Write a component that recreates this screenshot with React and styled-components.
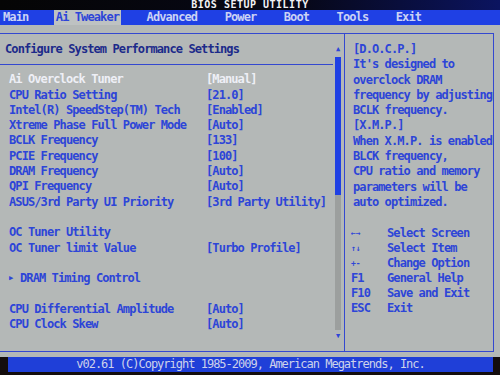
import React from "react";
import styled, { createGlobalStyle } from "styled-components";

const GlobalStyle = createGlobalStyle`
  html, body {
    margin: 0;
    padding: 0;
    background: #140d0d;
  }
`;

const Screen = styled.div`
  width: 500px;
  height: 375px;
  overflow: hidden;
  display: flex;
  flex-direction: column;
  background: #140d0d;
  font-family: "DejaVu Sans Mono", "Liberation Mono", monospace;
  font-size: 12px;
  font-weight: bold;
  letter-spacing: -0.9px;
`;

const TitleBar = styled.div`
  height: 10px;
  line-height: 10px;
  overflow: hidden;
  background: linear-gradient(to right, #050505 0%, #070818 60%, #0b1460 100%);
  color: #f2f2f6;
  text-align: center;
  font-size: 10px;
  letter-spacing: 0.5px;
`;

const MenuBar = styled.div`
  height: 15px;
  display: flex;
  gap: 23.5px;
  padding-left: 1px;
  background: #1f40e4;
`;

const MenuItem = styled.div`
  padding: 0 2px;
  line-height: 15px;
  color: ${(p) => (p.$active ? "#2d45d8" : "#cbd2f4")};
  background: ${(p) => (p.$active ? "#bec2c2" : "transparent")};
`;

const Body = styled.div`
  height: 332px;
  box-sizing: border-box;
  padding: 8px 6px 5px 0;
  background: #b4b8b7;
`;

const Frame = styled.div`
  height: 100%;
  box-sizing: border-box;
  display: grid;
  grid-template-columns: 345px 1fr;
  border: 1px solid #3448d0;
  border-left: none;
`;

const LeftPanel = styled.div`
  display: grid;
  grid-template-columns: 1fr 11px;
  border-right: 1px solid #3448d0;
  min-height: 0;
`;

const Content = styled.div`
  display: flex;
  flex-direction: column;
`;

const Heading = styled.div`
  height: 30px;
  line-height: 30px;
  padding-left: 5px;
  color: #1c2a8a;
  border-bottom: 1px solid #3448d0;
`;

const List = styled.div`
  padding-top: 7.3px;
`;

const Row = styled.div`
  display: grid;
  grid-template-columns: 197px 1fr;
  height: 15.31px;
  line-height: 15.31px;
  padding-left: 9px;
  white-space: pre;
  color: ${(p) => (p.$active ? "#eeeff6" : "#2d45d8")};
`;

const Pointer = styled.span`
  display: inline-block;
  width: 11px;
  font-size: 7px;
  vertical-align: top;
`;

const ScrollColumn = styled.div`
  display: flex;
  flex-direction: column;
  align-items: flex-start;
  padding: 11px 0 11px 2px;
`;

const Arrow = styled.div`
  width: 6px;
  height: 8px;
  line-height: 8px;
  font-size: 7px;
  text-align: center;
  letter-spacing: 0;
  color: #2d45d8;
`;

const Thumb = styled.div`
  width: 6px;
  height: 138px;
  margin-top: 4px;
  background: #1f40e4;
`;

const Track = styled.div`
  width: 6px;
  flex: 1;
  margin-bottom: 2px;
  background: #9c9f9e;
`;

const RightPanel = styled.div`
  padding: 8px 0 0 8px;
  overflow: hidden;
  color: #2d45d8;
`;

const Line = styled.div`
  height: 15.3px;
  line-height: 15.3px;
  white-space: pre;
`;

const KeyRow = styled.div`
  display: grid;
  grid-template-columns: 36px 1fr;
  height: 15.1px;
  line-height: 15.1px;
  margin-left: -2px;
  white-space: pre;
`;

const Key = styled.span`
  font-size: ${(p) => (p.$small ? "8px" : "12px")};
  letter-spacing: ${(p) => (p.$small ? "0" : "-0.9px")};
`;

const Footer = styled.div`
  height: 15px;
  line-height: 15px;
  margin: 0 7px 0 8px;
  background: #1f3fd8;
  color: #cdd2ea;
  text-align: center;
  font-weight: normal;
  letter-spacing: -1px;
`;

const menu = ["Main", "Ai Tweaker", "Advanced", "Power", "Boot", "Tools", "Exit"];

const rows = [
  { label: "Ai Overclock Tuner", value: "[Manual]", active: true },
  { label: "CPU Ratio Setting", value: "[21.0]" },
  { label: "Intel(R) SpeedStep(TM) Tech", value: "[Enabled]" },
  { label: "Xtreme Phase Full Power Mode", value: "[Auto]" },
  { label: "BCLK Frequency", value: "[133]" },
  { label: "PCIE Frequency", value: "[100]" },
  { label: "DRAM Frequency", value: "[Auto]" },
  { label: "QPI Frequency", value: "[Auto]" },
  { label: "ASUS/3rd Party UI Priority", value: "[3rd Party Utility]" },
  {},
  { label: "OC Tuner Utility" },
  { label: "OC Tuner limit Value", value: "[Turbo Profile]" },
  {},
  { label: "DRAM Timing Control", sub: true },
  {},
  { label: "CPU Differential Amplitude", value: "[Auto]" },
  { label: "CPU Clock Skew", value: "[Auto]" },
];

const help = [
  "[D.O.C.P.]",
  "It's designed to",
  "overclock DRAM",
  "frequency by adjusting",
  "BCLK frequency.",
  "[X.M.P.]",
  "When X.M.P. is enabled",
  "BLCK frequency,",
  "CPU ratio and memory",
  "parameters will be",
  "auto optimized.",
  "",
];

const keys = [
  { key: "←→", small: true, text: "Select Screen" },
  { key: "↑↓", small: true, text: "Select Item" },
  { key: "+-", small: true, text: "Change Option" },
  { key: "F1", text: "General Help" },
  { key: "F10", text: "Save and Exit" },
  { key: "ESC", text: "Exit" },
];

export default function App() {
  return (
    <Screen>
      <GlobalStyle />
      <TitleBar>BIOS SETUP UTILITY</TitleBar>
      <MenuBar>
        {menu.map((m) => (
          <MenuItem key={m} $active={m === "Ai Tweaker"}>
            {m}
          </MenuItem>
        ))}
      </MenuBar>
      <Body>
        <Frame>
          <LeftPanel>
            <Content>
              <Heading>Configure System Performance Settings</Heading>
              <List>
                {rows.map((r, i) => (
                  <Row key={i} $active={r.active}>
                    <span>
                      {r.sub && <Pointer>▶</Pointer>}
                      {r.label || ""}
                    </span>
                    <span>{r.value || ""}</span>
                  </Row>
                ))}
              </List>
            </Content>
            <ScrollColumn>
              <Arrow>▲</Arrow>
              <Thumb />
              <Track />
              <Arrow>▼</Arrow>
            </ScrollColumn>
          </LeftPanel>
          <RightPanel>
            {help.map((h, i) => (
              <Line key={i}>{h}</Line>
            ))}
            {keys.map((k) => (
              <KeyRow key={k.text}>
                <Key $small={k.small}>{k.key}</Key>
                <span>{k.text}</span>
              </KeyRow>
            ))}
          </RightPanel>
        </Frame>
      </Body>
      <Footer>v02.61 (C)Copyright 1985-2009, American Megatrends, Inc.</Footer>
    </Screen>
  );
}
